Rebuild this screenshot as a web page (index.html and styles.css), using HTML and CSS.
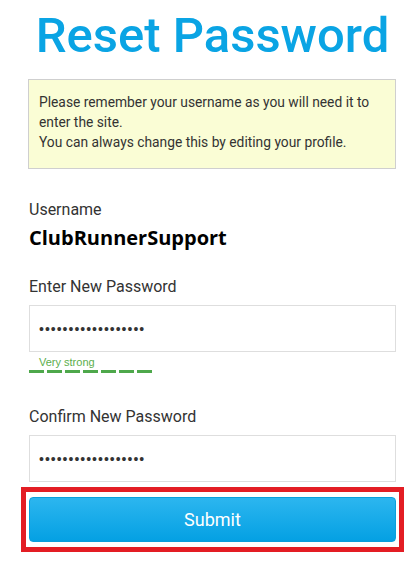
FILE: index.html
```html
<!DOCTYPE html>
<html lang="en">
<head>
<meta charset="utf-8">
<title>Reset Password</title>
<link rel="stylesheet" href="styles.css">
</head>
<body>
<main class="page">
  <h1 class="title">Reset Password</h1>
  <div class="notice">
    Please remember your username as you will need it to enter the site.<br>
    You can always change this by editing your profile.
  </div>
  <div class="field">
    <div class="label">Username</div>
    <div class="username">ClubRunnerSupport</div>
  </div>
  <div class="field field-pw">
    <label class="label" for="pw1">Enter New Password</label>
    <input class="input" id="pw1" type="password" value="abcdefghijklmnopqr">
    <div class="strength-text">Very strong</div>
    <div class="strength-bar">
      <span></span><span></span><span></span><span></span><span></span><span></span><span></span>
    </div>
  </div>
  <div class="field field-confirm">
    <label class="label" for="pw2">Confirm New Password</label>
    <input class="input" id="pw2" type="password" value="abcdefghijklmnopqr">
  </div>
  <div class="highlight">
    <button class="submit" type="button">Submit</button>
  </div>
</main>
</body>
</html>
```

FILE: styles.css
```css
* { box-sizing: border-box; }
html, body { margin: 0; padding: 0; background: #fff; }
body { font-family: Roboto, "Liberation Sans", Arial, sans-serif; color: #333; }

.page {
  width: 419px;
  padding: 0 23px 0 29px;
  display: flex;
  flex-direction: column;
}

.title {
  margin: 6px 0 0;
  font-size: 49px;
  line-height: 60px;
  font-weight: 500;
  color: #0aa4e4;
  text-align: center;
  white-space: nowrap;
}

.notice {
  margin: 13px 0 0 -1px;
  border: 1px solid #cfcfcf;
  background: #fafdd5;
  padding: 12px 10px 16px;
  font-size: 13.8px;
  line-height: 20px;
  color: #333;
}

.field { display: flex; flex-direction: column; margin-top: 31px; }
.field-pw { margin-top: 26px; }
.field-confirm { margin-top: 34px; }

.label {
  font-size: 16px;
  line-height: 20px;
  color: #333;
}

.username {
  margin-top: 5px;
  font-family: "Open Sans", "Noto Sans", sans-serif;
  font-weight: 700;
  font-size: 20px;
  line-height: 26px;
  color: #000;
}

.input {
  margin-top: 8px;
  height: 47px;
  border: 1px solid #dedede;
  padding: 0 9px;
  font-family: "Liberation Sans", Arial, sans-serif;
  font-size: 14px;
  letter-spacing: 1px;
  color: #333;
  background: #fff;
  outline: none;
  width: 100%;
}

.strength-text {
  margin-top: 4px;
  padding-left: 10px;
  font-family: "Liberation Sans", Arial, sans-serif;
  font-size: 11px;
  line-height: 13px;
  color: #5cae4c;
}

.strength-bar {
  margin-top: 1px;
  display: flex;
  gap: 3px;
}
.strength-bar span {
  width: 15px;
  height: 3px;
  background: #4ea84b;
}

.highlight {
  margin: 5px -8px 0;
  border: 5px solid #e31d24;
  padding: 5px 3px;
}

.submit {
  display: block;
  width: 100%;
  height: 45px;
  border: 1px solid #0a9fdc;
  border-radius: 4px;
  background: linear-gradient(to bottom, #2cb6ef, #04a0e3);
  color: #fff;
  font-family: Roboto, sans-serif;
  font-size: 18px;
  line-height: 43px;
  padding: 0 0 2px;
}
```
